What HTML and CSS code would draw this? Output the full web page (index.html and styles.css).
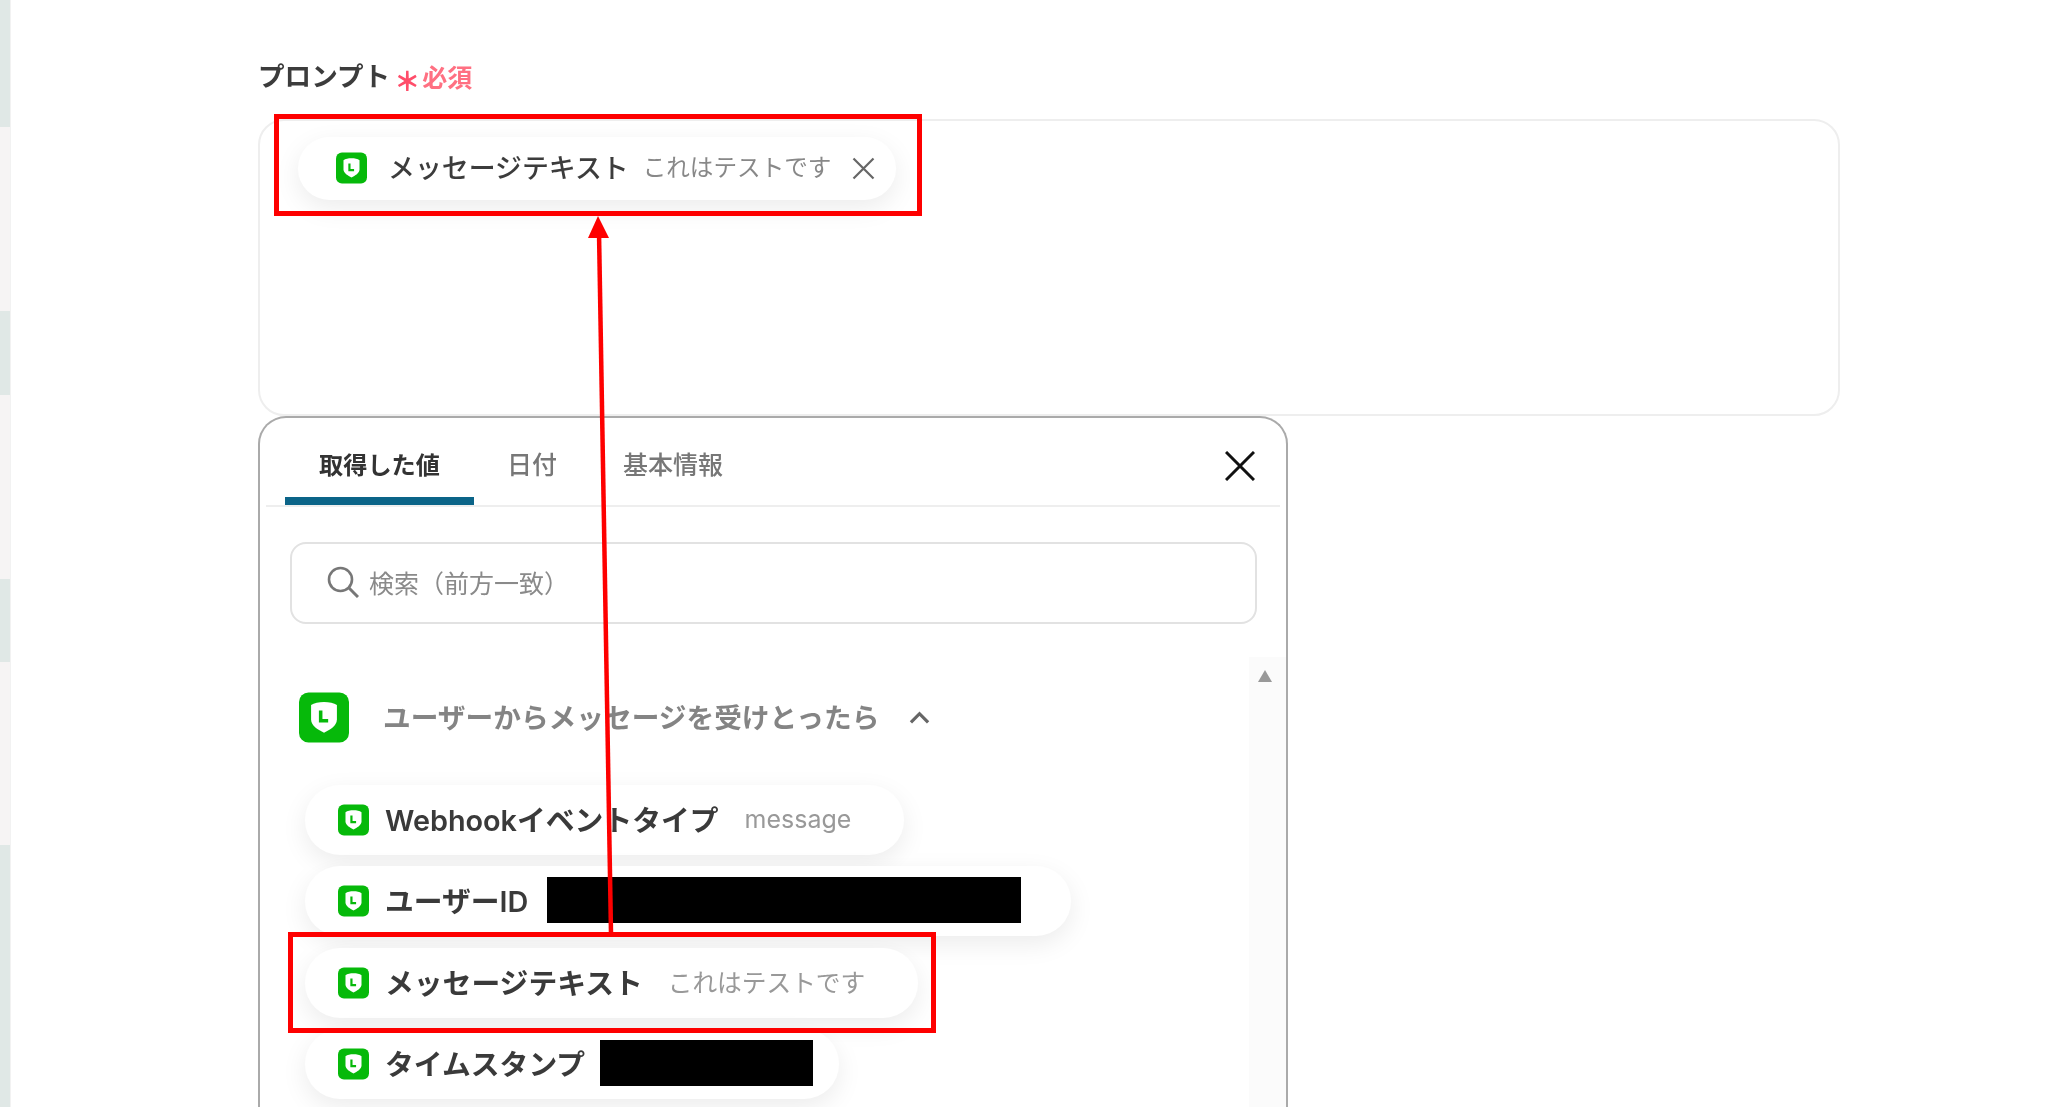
FILE: index.html
```html
<!DOCTYPE html>
<html lang="ja">
<head>
<meta charset="utf-8">
<title>プロンプト</title>
<link rel="stylesheet" href="styles.css">
</head>
<body>
<svg class="defs" width="0" height="0" aria-hidden="true">
  <symbol id="line" viewBox="0 0 24 24">
    <rect width="24" height="24" rx="4.6" fill="#06b90a"/>
    <path d="M5.8 6C8.5 4 15.5 4 18.2 6V13C18.2 16 14.8 18 12 19.3C9.2 18 5.8 16 5.8 13Z" fill="#fff"/>
    <path d="M10.4 8.6V13.6H14" fill="none" stroke="#06b90a" stroke-width="1.7"/>
  </symbol>
</svg>
<div class="page">
  <aside class="strip">
    <div class="band band-a band-1"></div>
    <div class="band band-b band-2"></div>
    <div class="band band-a band-3"></div>
    <div class="band band-b band-4"></div>
    <div class="band band-a band-5"></div>
    <div class="band band-b band-6"></div>
    <div class="band band-a band-7"></div>
  </aside>
  <main class="main">
    <div class="field-label">
      <span class="label-text">プロンプト</span>
      <span class="req-mark">＊</span>
      <span class="req-text">必須</span>
    </div>
    <div class="textarea">
      <div class="chip">
        <svg class="icon chip-icon"><use href="#line"/></svg>
        <span class="chip-name">メッセージテキスト</span>
        <span class="chip-value">これはテストです</span>
        <svg class="chip-x" viewBox="0 0 23 23"><path d="M1.5 1.5L21.5 21.5M21.5 1.5L1.5 21.5" fill="none" stroke="#666" stroke-width="2.2"/></svg>
      </div>
    </div>
    <section class="panel">
      <div class="tabs">
        <button class="tab tab-active">取得した値</button>
        <button class="tab">日付</button>
        <button class="tab">基本情報</button>
        <svg class="panel-x" viewBox="0 0 30 30"><path d="M1 1L29 29M29 1L1 29" fill="none" stroke="#111" stroke-width="3"/></svg>
      </div>
      <div class="search">
        <svg class="search-icon" viewBox="0 0 32 32"><circle cx="13.5" cy="13.5" r="11.5" fill="none" stroke="#777" stroke-width="2.6"/><path d="M22 22L31 31" stroke="#777" stroke-width="3"/></svg>
        <span class="search-text">検索（前方一致）</span>
      </div>
      <div class="scroll">
        <div class="list">
          <div class="group">
            <svg class="group-icon"><use href="#line"/></svg>
            <span class="group-title">ユーザーからメッセージを受けとったら</span>
            <svg class="chevron" viewBox="0 0 22 13"><path d="M2 11.5L11 2.5L20 11.5" fill="none" stroke="#666" stroke-width="3.4"/></svg>
          </div>
          <div class="pills">
            <div class="pill">
              <svg class="icon"><use href="#line"/></svg>
              <span class="pill-name">Webhookイベントタイプ</span>
              <span class="pill-value pill-value-latin">message</span>
            </div>
            <div class="pill pill-user">
              <svg class="icon"><use href="#line"/></svg>
              <span class="pill-name">ユーザーID</span>
              <span class="redact redact-user"></span>
            </div>
            <div class="pill">
              <svg class="icon"><use href="#line"/></svg>
              <span class="pill-name">メッセージテキスト</span>
              <span class="pill-value">これはテストです</span>
            </div>
            <div class="pill pill-time">
              <svg class="icon"><use href="#line"/></svg>
              <span class="pill-name">タイムスタンプ</span>
              <span class="redact redact-time"></span>
            </div>
          </div>
        </div>
        <div class="scrollbar"><span class="scroll-up"></span></div>
      </div>
    </section>
  </main>
  <div class="mark mark-top"></div>
  <div class="mark mark-bottom"></div>
  <svg class="arrow" viewBox="0 0 2048 1107">
    <path d="M611 933L599 232" fill="none" stroke="#fe0000" stroke-width="4.5"/>
    <path d="M598 216L609 238H588Z" fill="#fe0000"/>
  </svg>
</div>
</body>
</html>
```
FILE: styles.css
```css
* { box-sizing: border-box; }
html, body { margin: 0; height: 100%; }
body {
  background: #fff;
  overflow: hidden;
  font-family: "Noto Sans CJK JP", "Noto Sans", sans-serif;
  color: #333;
}
.defs { position: absolute; }
.page {
  position: relative;
  display: flex;
  width: 2048px;
  height: 1107px;
  overflow: hidden;
  filter: blur(0.55px);
}
.strip {
  flex: 0 0 11px;
  display: flex;
  flex-direction: column;
  border-right: 1px solid #f2f2f2;
}
.band-a { background: #e0e8e6; }
.band-b { background: #f6f4f4; }
.band-1 { height: 127px; }
.band-2 { height: 184px; }
.band-3 { height: 84px; }
.band-4 { height: 184px; }
.band-5 { height: 83px; }
.band-6 { height: 183px; }
.band-7 { flex: 1; }

.main {
  flex: 1;
  padding: 58px 0 0 247px;
}
.field-label {
  display: flex;
  align-items: center;
  width: 1582px;
  height: 36px;
  margin-bottom: 25px;
}
.label-text {
  font-size: 26.6px;
  font-weight: 700;
  color: #3c3c3c;
  padding-bottom: 4px;
}
.req-mark {
  margin-left: 4px;
  width: 26px;
  font-size: 26px;
  line-height: 26px;
  font-weight: 900;
  color: #ff4d6a;
  padding-top: 8px;
}
.req-text {
  margin-left: 2px;
  font-size: 25px;
  font-weight: 700;
  color: #ff7082;
}
.textarea {
  width: 1582px;
  height: 297px;
  border: 2px solid #eee;
  border-radius: 26px;
  padding: 16px 0 0 38px;
}
.chip {
  display: inline-flex;
  align-items: center;
  height: 63px;
  padding: 0 21px 0 38px;
  border-radius: 32px;
  background: #fff;
  box-shadow: 0 8px 26px rgba(0, 0, 0, 0.08);
}
.icon {
  flex: none;
  width: 31px;
  height: 32px;
}
.chip-icon { margin-bottom: 2px; }
.chip-name {
  margin-left: 21px;
  font-size: 26.9px;
  font-weight: 500;
  color: #3c3c3c;
  white-space: nowrap;
  padding-bottom: 5px;
}
.chip-value {
  margin-left: 14px;
  font-size: 23.6px;
  color: #888;
  white-space: nowrap;
  padding-bottom: 5px;
}
.chip-x {
  flex: none;
  width: 23px;
  height: 23px;
  margin-left: 21px;
}
.panel {
  width: 1030px;
  height: 760px;
  border: 2px solid #aaa;
  border-bottom: 0;
  border-radius: 28px 28px 0 0;
}
.tabs {
  display: flex;
  align-items: stretch;
  height: 89px;
  margin: 0 6px;
  padding-left: 19px;
  border-bottom: 2px solid #eee;
}
.tab {
  padding: 11px 33px 0;
  border: 0;
  border-bottom: 8px solid transparent;
  background: none;
  font: 500 25px "Noto Sans CJK JP", sans-serif;
  color: #777;
  white-space: nowrap;
}
.tab-active {
  padding: 11px 34px 0;
  font-size: 24.2px;
  font-weight: 700;
  color: #333;
  border-bottom-color: #0b6488;
  border-radius: 8px 8px 0 0;
}
.panel-x {
  width: 30px;
  height: 30px;
  margin: 33px 25px 0 auto;
}
.search {
  display: flex;
  align-items: center;
  height: 82px;
  margin: 35px 29px 0 30px;
  padding-left: 35px;
  border: 2px solid #e2e2e2;
  border-radius: 16px;
}
.search-icon {
  flex: none;
  width: 32px;
  height: 32px;
  margin-bottom: 3px;
}
.search-text {
  margin-left: 10px;
  font-size: 25px;
  color: #8a8a8a;
  padding-bottom: 3px;
}
.scroll {
  display: flex;
  margin-top: 33px;
  height: 600px;
}
.list {
  flex: 1;
  padding: 35px 0 0 39px;
}
.group {
  display: flex;
  align-items: center;
  height: 51px;
  margin-bottom: 42px;
}
.group-icon {
  flex: none;
  width: 50px;
  height: 51px;
}
.group-title {
  margin-left: 34px;
  font-size: 27.7px;
  font-weight: 700;
  color: #848484;
  white-space: nowrap;
  padding-bottom: 4px;
}
.chevron {
  width: 21px;
  height: 13px;
  margin-left: 30px;
}
.pills {
  display: flex;
  flex-direction: column;
  align-items: flex-start;
  gap: 11.3px;
  margin-left: 6px;
}
.pill {
  display: flex;
  align-items: center;
  height: 70px;
  padding: 0 53px 0 33px;
  border-radius: 35px;
  background: #fff;
  box-shadow: 0 8px 26px rgba(0, 0, 0, 0.08);
}
.pill-name {
  margin-left: 16px;
  font-family: "Inter", "Noto Sans CJK JP", sans-serif;
  font-size: 28.8px;
  font-weight: 600;
  color: #3a3a3a;
  white-space: nowrap;
  padding-bottom: 3px;
}
.pill-value {
  margin-left: 25px;
  font-size: 24.7px;
  color: #999;
  white-space: nowrap;
  padding-bottom: 3px;
}
.pill-value-latin {
  margin-left: 26px;
  font-family: "Inter", sans-serif;
  font-size: 25px;
}
.pill-user { padding-right: 50px; }
.pill-time { padding-right: 26px; }
.redact {
  flex: none;
  display: block;
  height: 46px;
  margin-bottom: 2px;
  background: #000;
}
.redact-user { width: 474px; margin-left: 19px; }
.redact-time { width: 213px; margin-left: 15px; }
.scrollbar {
  flex: 0 0 37px;
  display: flex;
  justify-content: center;
  padding-top: 13px;
  background: #fbfbfb;
}
.scroll-up {
  width: 0;
  height: 0;
  margin-right: 6px;
  border-left: 7px solid transparent;
  border-right: 7px solid transparent;
  border-bottom: 12px solid #999;
}
.mark {
  position: absolute;
  border: 5px solid #fe0000;
}
.mark-top {
  left: 274px;
  top: 114px;
  width: 648px;
  height: 102px;
}
.mark-bottom {
  left: 288px;
  top: 932px;
  width: 648px;
  height: 101px;
}
.arrow {
  position: absolute;
  left: 0;
  top: 0;
  width: 2048px;
  height: 1107px;
  pointer-events: none;
}
```
